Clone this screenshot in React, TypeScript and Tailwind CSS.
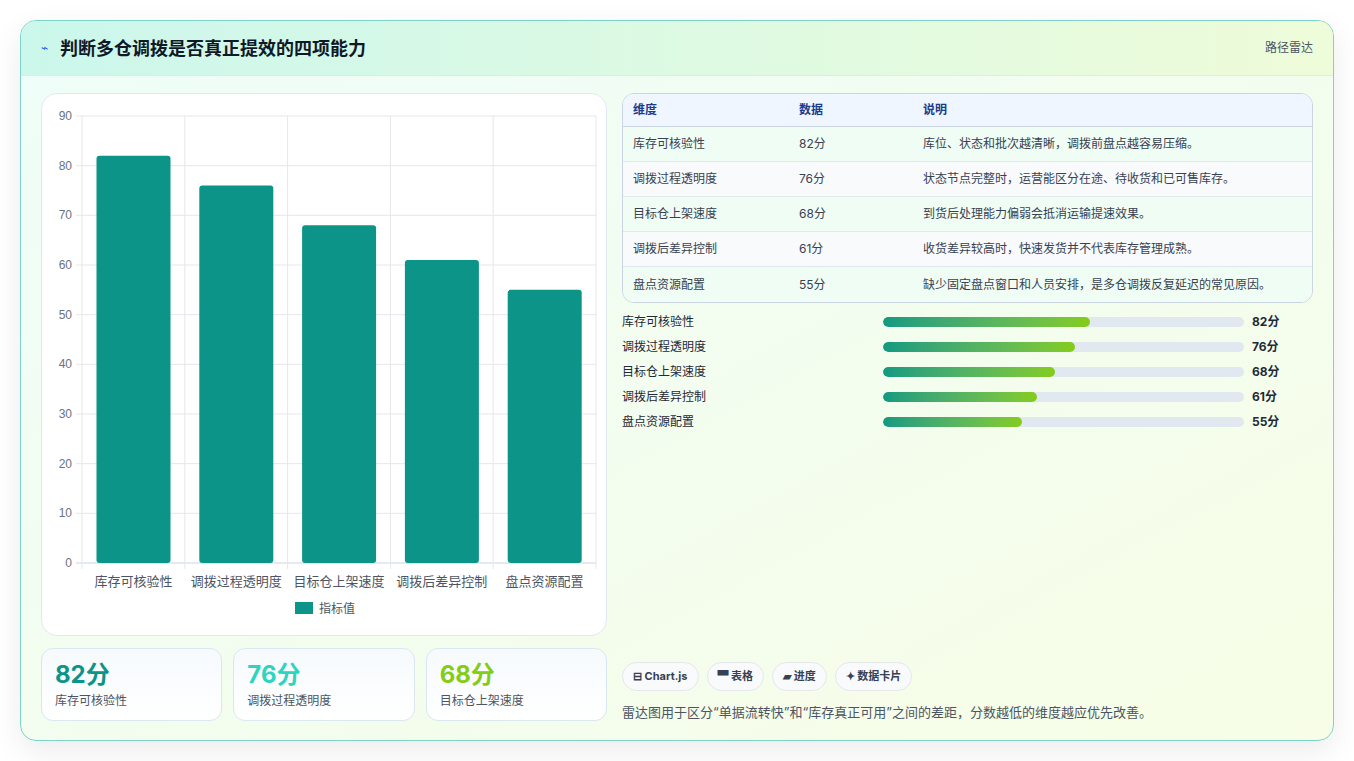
import React from "react";

const data = [
  { n: "库存可核验性", v: 82, d: "库位、状态和批次越清晰，调拨前盘点越容易压缩。" },
  { n: "调拨过程透明度", v: 76, d: "状态节点完整时，运营能区分在途、待收货和已可售库存。" },
  { n: "目标仓上架速度", v: 68, d: "到货后处理能力偏弱会抵消运输提速效果。" },
  { n: "调拨后差异控制", v: 61, d: "收货差异较高时，快速发货并不代表库存管理成熟。" },
  { n: "盘点资源配置", v: 55, d: "缺少固定盘点窗口和人员安排，是多仓调拨反复延迟的常见原因。" },
];

function Chart() {
  // card-local coords: plot x 40..554, y0=469, y90=22
  const x0 = 40, x1 = 554, yb = 469, yt = 22;
  const sy = (yb - yt) / 90;
  const cw = (x1 - x0) / 5;
  return (
    <svg width="566" height="541" viewBox="0 0 566 541" className="block">
      {[0, 10, 20, 30, 40, 50, 60, 70, 80, 90].map((t) => {
        const y = yb - t * sy;
        return (
          <g key={t}>
            <line x1={x0 - 6} x2={x1} y1={y} y2={y} stroke={t === 0 ? "#cbd5e1" : "#e5e7eb"} />
            <text x={x0 - 10} y={y + 4} textAnchor="end" fontSize="12" fill="#6b7280" fontFamily="Liberation Sans, sans-serif">{t}</text>
          </g>
        );
      })}
      {[0, 1, 2, 3, 4, 5].map((i) => (
        <line key={i} x1={x0 + i * cw} x2={x0 + i * cw} y1={yt} y2={yb + 6} stroke="#e5e7eb" />
      ))}
      {data.map((d, i) => {
        const h = d.v * sy;
        return (
          <g key={d.n}>
            <rect x={x0 + i * cw + 14.5} y={yb - h} width={74} height={h} rx="3" fill="#0d9488" />
            <text x={x0 + i * cw + cw / 2} y={yb + 23} textAnchor="middle" fontSize="13" fill="#4b5563" fontFamily="Noto Sans CJK SC, sans-serif">{d.n}</text>
          </g>
        );
      })}
      <rect x="253" y="508" width="18" height="12" fill="#0d9488" />
      <text x="277" y="519" fontSize="12" fill="#4b5563" fontFamily="Noto Sans CJK SC, sans-serif">指标值</text>
    </svg>
  );
}

export default function App() {
  return (
    <div className="w-[1354px] h-[761px] bg-white p-5 pb-0" style={{ fontFamily: "Inter, 'Noto Sans CJK SC', sans-serif" }}>
      <div className="h-[721px] rounded-2xl border border-[#7dd3c8] bg-gradient-to-br from-[#effdf9] to-[#f7fde6] shadow-[0_10px_30px_rgba(0,0,0,0.08)] overflow-hidden flex flex-col">
        <div className="h-[55px] flex items-center justify-between px-5 bg-gradient-to-r from-[#cbf7ec] to-[#eefcd9] border-b border-[#d6f0e6]">
          <div className="flex items-center gap-3">
            <span className="text-[#2563eb] text-xs">⌁</span>
            <span className="text-[18px] font-bold text-[#111827]">判断多仓调拨是否真正提效的四项能力</span>
          </div>
          <span className="text-[12px] text-[#4b5563]">路径雷达</span>
        </div>
        <div className="flex-1 flex gap-[15px] px-5 pt-[17px] pb-[18px]">
          <div className="w-[566px] flex flex-col gap-3">
            <div className="h-[543px] rounded-2xl bg-white border border-[#e2e8f0]"><Chart /></div>
            <div className="flex gap-[11px]">
              {[["82分", "text-[#0d9488]", "库存可核验性"], ["76分", "text-[#2dd4bf]", "调拨过程透明度"], ["68分", "text-[#84cc16]", "目标仓上架速度"]].map(([v, c, n]) => (
                <div key={n} className="flex-1 h-[73px] rounded-xl border border-[#dbe7f0] bg-gradient-to-b from-[#f6fafd] to-white px-[13px] pt-[10px]">
                  <div className={`text-[24px] font-bold leading-[32px] ${c}`}>{v}</div>
                  <div className="text-[12px] text-[#4b5563] mt-[1px]">{n}</div>
                </div>
              ))}
            </div>
          </div>
          <div className="flex-1 flex flex-col">
            <div className="rounded-xl border border-[#cbd5e1] overflow-hidden text-[12px]">
              <div className="flex h-[33px] items-center bg-[#eff6ff] border-b border-[#cbd5e1] text-[#1e3a8a] font-semibold px-[10px]">
                <div className="w-[166px]">维度</div><div className="w-[124px]">数据</div><div>说明</div>
              </div>
              {data.map((d, i) => (
                <div key={d.n} className={`flex h-[35px] items-center px-[10px] text-[#374151] ${i < 4 ? "border-b border-[#e2e8f0]" : ""} ${i % 2 ? "bg-[#f8fafc]" : "bg-[#f0fdf4]"}`}>
                  <div className="w-[166px]">{d.n}</div><div className="w-[124px]">{d.v}分</div><div>{d.d}</div>
                </div>
              ))}
            </div>
            <div className="flex flex-col gap-[9px] mt-[11px]">
              {data.map((d) => (
                <div key={d.n} className="flex items-center h-[16px] text-[12px]">
                  <div className="w-[261px] text-[#1f2937]">{d.n}</div>
                  <div className="w-[361px] h-[10px] rounded-full bg-[#e2e8f0] overflow-hidden">
                    <div className="h-full rounded-full bg-gradient-to-r from-[#0f9a80] to-[#84cc16]" style={{ width: `${d.v * 0.7}%` }} />
                  </div>
                  <div className="ml-[8px] font-bold text-[#1f2937]">{d.v}分</div>
                </div>
              ))}
            </div>
            <div className="flex-1" />
            <div className="flex gap-2 text-[11px] font-bold text-[#374151]">
              {["⊟ Chart.js", "▀ 表格", "▰ 进度", "✦ 数据卡片"].map((t) => (
                <span key={t} className="h-[29px] px-[10px] flex items-center rounded-full border border-[#e5e7eb] bg-[#f8fafc]">{t}</span>
              ))}
            </div>
            <div className="mt-[12px] text-[13px] text-[#4b5563]">雷达图用于区分“单据流转快”和“库存真正可用”之间的差距，分数越低的维度越应优先改善。</div>
          </div>
        </div>
      </div>
    </div>
  );
}
